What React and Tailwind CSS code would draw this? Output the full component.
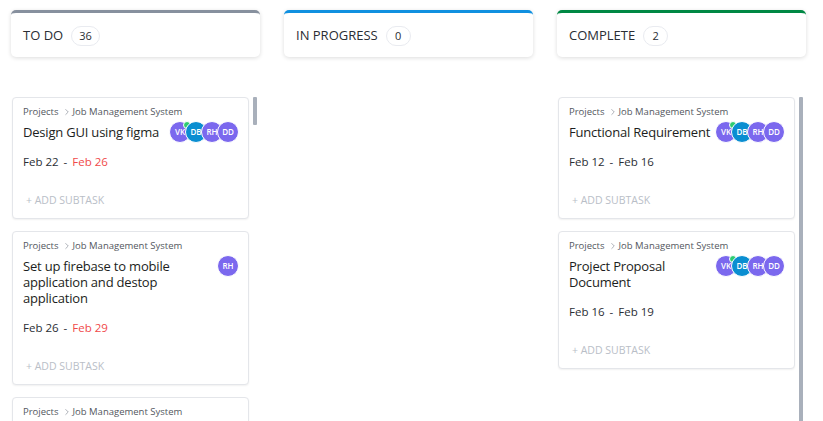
import { ChevronRight } from "lucide-react";

const people = {
  VK: "bg-[#7b68ee]",
  DB: "bg-[#0a8ed1]",
  RH: "bg-[#7b68ee]",
  DD: "bg-[#7b68ee]",
};

const columns = [
  {
    name: "TO DO",
    count: 36,
    bar: "border-t-[#87909e]",
    thumb: "h-[28px]",
    tasks: [
      { title: "Design GUI using figma", start: "Feb 22", end: "Feb 26", late: true, who: ["VK", "DB", "RH", "DD"] },
      { title: "Set up firebase to mobile application and destop application", start: "Feb 26", end: "Feb 29", late: true, who: ["RH"] },
      { title: "Create database schema", start: "Feb 29", end: "Mar 02", late: true, who: ["DB"] },
    ],
  },
  { name: "IN PROGRESS", count: 0, bar: "border-t-[#1090e0]", tasks: [] },
  {
    name: "COMPLETE",
    count: 2,
    bar: "border-t-[#008844]",
    thumb: "h-[400px]",
    tasks: [
      { title: "Functional Requirement", start: "Feb 12", end: "Feb 16", who: ["VK", "DB", "RH", "DD"] },
      { title: "Project Proposal Document", start: "Feb 16", end: "Feb 19", who: ["VK", "DB", "RH", "DD"] },
    ],
  },
];

function Avatars({ who }) {
  // keep avatars at title line height so they don't push the dates down
  return (
    <div className="flex items-center h-[16px] shrink-0">
      {who.map((p, i) => (
        <div
          key={p}
          className={`relative w-[22px] h-[22px] shrink-0 rounded-full border border-white flex items-center justify-center text-[8px] font-semibold text-white ${people[p]} ${i > 0 ? "-ml-[6px]" : ""}`}
        >
          {p}
          {p === "VK" && who.length > 1 && (
            <span className="absolute -top-[1px] right-[-1px] w-[8px] h-[8px] rounded-full bg-[#2ecc71] border border-white" />
          )}
        </div>
      ))}
    </div>
  );
}

function TaskCard({ task }) {
  return (
    <div className="rounded-[4px] border border-[#e4e6ea] bg-white shadow-[0_1px_2px_rgba(0,0,0,0.06)] pl-[10px] pr-[9px] pt-[7px] pb-[9px]">
      <div className="flex items-center h-[14px] text-[9.5px] text-[#53575e]">
        <span>Projects</span>
        <ChevronRight size={10} strokeWidth={1.5} className="ml-[3px] mr-[1px] text-[#7c828d]" />
        <span>Job Management System</span>
      </div>
      <div className="flex items-start justify-between mt-[5px]">
        <div className="w-[160px] text-[13px] leading-[16px] tracking-[-0.2px] text-[#1c1e21]">{task.title}</div>
        <Avatars who={task.who} />
      </div>
      <div className="mt-[14px] h-[16px] flex items-center text-[11.5px] text-[#2a2e34]">
        <span>{task.start}</span>
        <span className="mx-[5px]">-</span>
        <span className={task.late ? "text-[#f04a4a]" : ""}>{task.end}</span>
      </div>
      <div className="mt-[23px] h-[16px] flex items-center pl-[3px] text-[10.5px] text-[#b9bec7]">+ ADD SUBTASK</div>
    </div>
  );
}

function Column({ col }) {
  return (
    <div className="w-[249px] shrink-0">
      <div className={`h-[47px] rounded-[5px] border-t-[3px] ${col.bar} bg-white shadow-[0_1px_4px_rgba(0,0,0,0.14)] flex items-center pl-[12px] pt-[2px]`}>
        <span className="text-[13px] font-medium text-[#2a2e34]">{col.name}</span>
        <span className="ml-[8px] h-[20px] min-w-[25px] px-[7px] rounded-full border border-[#e9ebf0] flex items-center justify-center text-[11px] text-[#2a2e34]">
          {col.count}
        </span>
      </div>
      <div className="flex mt-[40px]">
        <div className="w-[237px] ml-px flex flex-col gap-[12px]">
          {col.tasks.map((t) => (
            <TaskCard key={t.title} task={t} />
          ))}
        </div>
        {col.thumb && (
          <div className="ml-[4px] w-[4px]">
            <div className={`w-[4px] ${col.thumb} rounded-[1px] bg-[#a9b0bb]`} />
          </div>
        )}
      </div>
    </div>
  );
}

export default function App() {
  return (
    <div className="h-[421px] overflow-hidden bg-white font-['Open_Sans',sans-serif]">
      <div className="flex gap-[24px] pl-[11px] pt-[10px]">
        {columns.map((c) => (
          <Column key={c.name} col={c} />
        ))}
      </div>
    </div>
  );
}
